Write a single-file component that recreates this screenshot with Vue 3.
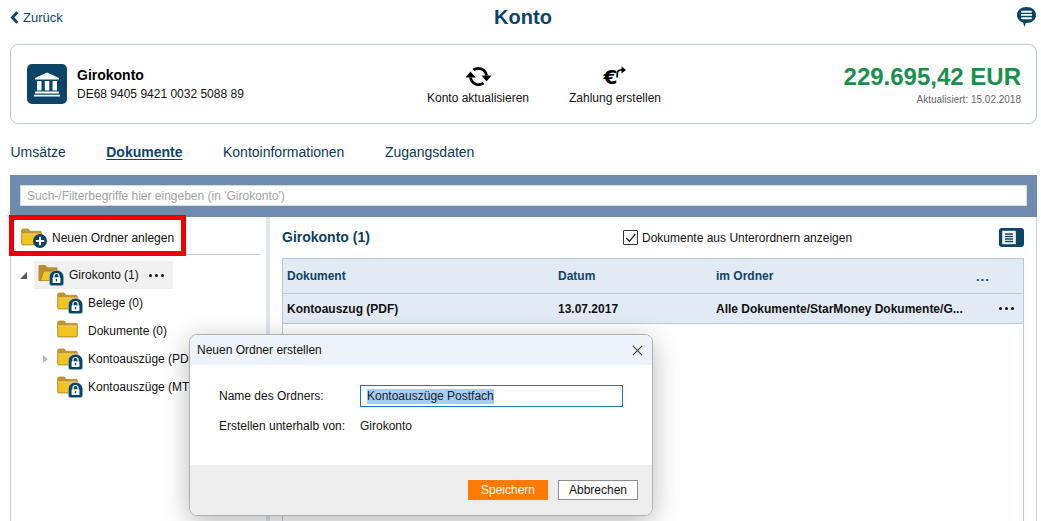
<script setup>
const tabs = [
  { label: 'Umsätze' },
  { label: 'Dokumente', active: true },
  { label: 'Kontoinformationen' },
  { label: 'Zugangsdaten' }
]
const children = [
  { name: 'Belege', count: '(0)', lock: true },
  { name: 'Dokumente', count: '(0)', lock: false },
  { name: 'Kontoauszüge (PDF)', count: '(1)', lock: true, expand: true },
  { name: 'Kontoauszüge (MT940)', count: '(0)', lock: true }
]
</script>

<template>
  <div class="page">
    <svg class="defs" width="0" height="0" aria-hidden="true">
      <defs>
        <symbol id="folder" viewBox="0 0 22 18">
          <path d="M.5 2C.5 1.200 1.200.5 2 .5h5.500L10 3h10c.8 0 1.500.7 1.500 1.500V16c0 .8-.7 1.500-1.500 1.500H2C1.200 17.500.5 16.800.5 16z" fill="#c4952a" stroke="#a98226" stroke-width=".6"/>
          <path d="M1.300 6.200h19.400V16c0 .4-.3.700-.7.700H2c-.4 0-.7-.3-.7-.7z" fill="#f1c51d"/>
          <path d="M1.300 5.400h19.400v.9H1.300z" fill="#fbe9a0"/>
        </symbol>
        <symbol id="folder-open" viewBox="0 0 22 18">
          <path d="M.5 2C.5 1.200 1.200.5 2 .5h5.500L10 3h9c.8 0 1.500.7 1.500 1.500V7H6L2.800 17.500H.5z" fill="#b88f2e"/>
          <path d="M5.700 6.500H22L19 17.500H1.500z" fill="#a98226"/>
          <path d="M6.300 7.400H20.700L18.300 16.600H3.200z" fill="#f0c62c"/>
        </symbol>
        <symbol id="lock" viewBox="0 0 16 17">
          <path d="M8 .3C12.500.3 15.700 3.500 15.700 7.500V14a2.700 2.700 0 0 1-2.700 2.700H3A2.700 2.700 0 0 1 .3 14V7.500C.3 3.500 3.500.3 8 .3z" fill="#0c4468" stroke="#fff" stroke-width=".5"/>
          <path d="M5.300 8V6.400a2.700 2.700 0 0 1 5.400 0V8" fill="none" stroke="#fff" stroke-width="1.300"/>
          <rect x="3.800" y="7.600" width="8.400" height="6.200" rx=".8" fill="#fff"/>
          <rect x="7.300" y="9.400" width="1.400" height="2.600" fill="#0c4468"/>
        </symbol>
      </defs>
    </svg>

    <header class="topbar">
      <a class="back">
        <svg class="chev" viewBox="0 0 9 13"><path d="M7.300 1.200 2.400 6.500l4.900 5.300" fill="none" stroke="#0c4468" stroke-width="2.800"/></svg>
        Zurück
      </a>
      <h1>Konto</h1>
      <svg class="chat" viewBox="0 0 19 20">
        <path d="M9.500 0C15 0 19 3.400 19 8s-4 8-9.500 8h-.7L7.500 20 6 15.500C2.500 14.500 0 11.600 0 8c0-4.600 4-8 9.500-8z" fill="#0c4468"/>
        <path d="M5 3.800h9a1 1 0 0 1 0 2H5a1 1 0 0 1 0-2zM4 7h11v1.800H4zM5 10.200h9a1 1 0 0 1 0 2H5a1 1 0 0 1 0-2z" fill="#fff"/>
      </svg>
    </header>

    <section class="card">
      <div class="account">
        <div class="bank">
          <svg viewBox="0 0 40 40">
            <path d="M20 8.500 8 14v1.500h24V14z" fill="#fff"/>
            <path d="M10 17h4.500v9.500H10zM17.800 17h4.500v9.500h-4.500zM25.500 17H30v9.500h-4.500z" fill="#fff"/>
            <path d="M8 27.500h24v2H8zM7 30.800h26v1.700H7z" fill="#fff"/>
          </svg>
        </div>
        <div class="acct-text">
          <strong>Girokonto</strong>
          <span>DE68 9405 9421 0032 5088 89</span>
        </div>
      </div>
      <div class="actions">
        <div class="action update">
          <svg viewBox="0 0 25 21">
            <path d="M7.500 3.800A8.400 8.400 0 0 1 20.500 9.500" fill="none" stroke="#000" stroke-width="2.700"/>
            <path d="M15.500 9.500h10L20.500 15.500z" fill="#000"/>
            <path d="M17.500 17.200A8.400 8.400 0 0 1 4.500 11.500" fill="none" stroke="#000" stroke-width="2.700"/>
            <path d="M-.5 11.500h10L4.500 5.500z" fill="#000"/>
          </svg>
          <span>Konto aktualisieren</span>
        </div>
        <div class="action pay">
          <div class="pay-icon">
            <b>€</b>
            <svg viewBox="0 0 10 12">
              <path d="M1.200 11.500V8C1.200 5.300 2.800 4 5 4h1.500" fill="none" stroke="#000" stroke-width="1.700"/>
              <path d="M5.500.5 10 4 5.500 7.500z" fill="#000"/>
            </svg>
          </div>
          <span>Zahlung erstellen</span>
        </div>
      </div>
      <div class="balance">
        <div class="amount">229.695,42 EUR</div>
        <div class="updated">Aktualisiert: 15.02.2018</div>
      </div>
    </section>

    <nav class="tabs">
      <a v-for="t in tabs" :key="t.label" :class="{ active: t.active }">{{ t.label }}</a>
    </nav>

    <div class="searchbar">
      <div class="search">Such-/Filterbegriffe hier eingeben (in 'Girokonto')</div>
    </div>

    <div class="panels">
      <aside class="left">
        <div class="new-folder">
          <div class="nf-icon">
            <svg class="nf-folder"><use href="#folder"/></svg>
            <svg class="nf-plus" viewBox="0 0 15 15">
              <circle cx="7.500" cy="7.500" r="7.500" fill="#0c4468"/>
              <path d="M7.500 3v9M3 7.500h9" stroke="#fff" stroke-width="2"/>
            </svg>
          </div>
          <span>Neuen Ordner anlegen</span>
        </div>
        <div class="rule"></div>
        <div class="tree">
          <div class="root-row">
            <span class="tri-open"></span>
            <div class="root-sel">
              <span class="ficon">
                <svg class="f"><use href="#folder-open"/></svg>
                <svg class="l"><use href="#lock"/></svg>
              </span>
              <span class="tname">Girokonto</span><span class="tcount">(1)</span>
              <span class="dots"><i></i><i></i><i></i></span>
            </div>
          </div>
          <div v-for="c in children" :key="c.name" class="child-row">
            <span class="tri-slot"><span v-if="c.expand" class="tri-closed"></span></span>
            <span class="ficon">
              <svg class="f"><use href="#folder"/></svg>
              <svg v-if="c.lock" class="l"><use href="#lock"/></svg>
            </span>
            <span class="tname">{{ c.name }}</span><span class="tcount">{{ c.count }}</span>
          </div>
        </div>
      </aside>

      <main class="right">
        <div class="right-head">
          <h2>Girokonto (1)</h2>
          <label class="check">
            <span class="box">
              <svg viewBox="0 0 12 12"><path d="M2 6.500 5 9.500 10.500 2.800" fill="none" stroke="#222" stroke-width="1.200"/></svg>
            </span>
            Dokumente aus Unterordnern anzeigen
          </label>
          <div class="view-btn">
            <svg viewBox="0 0 14 14">
              <rect x=".8" y=".8" width="12.400" height="12.400" fill="#fff" stroke="#fff"/>
              <path d="M3 3.500h8M3 6h8M3 8.500h8M3 11h8" stroke="#0c4468" stroke-width="1.400"/>
            </svg>
          </div>
        </div>
        <div class="table">
          <div class="thead">
            <span class="c1">Dokument</span>
            <span class="c2">Datum</span>
            <span class="c3">im Ordner</span>
            <span class="c4">...</span>
          </div>
          <div class="trow">
            <span class="c1">Kontoauszug (PDF)</span>
            <span class="c2">13.07.2017</span>
            <span class="c3">Alle Dokumente/StarMoney Dokumente/G...</span>
            <span class="c4 dots"><i></i><i></i><i></i></span>
          </div>
        </div>
      </main>
    </div>

    <div class="modal">
      <div class="m-head">
        <span>Neuen Ordner erstellen</span>
        <svg viewBox="0 0 12 12"><path d="M1 1l10 10M11 1 1 11" stroke="#333" stroke-width="1.100" fill="none"/></svg>
      </div>
      <div class="m-body">
        <div class="m-row">
          <label>Name des Ordners:</label>
          <div class="m-input"><span class="sel">Kontoauszüge Postfach</span></div>
        </div>
        <div class="m-row">
          <label>Erstellen unterhalb von:</label>
          <span>Girokonto</span>
        </div>
      </div>
      <div class="m-foot">
        <button class="save">Speichern</button>
        <button class="cancel">Abbrechen</button>
      </div>
    </div>
  </div>
</template>

<style scoped>
.page {
  position: relative;
  width: 1041px;
  height: 521px;
  overflow: hidden;
  background: #fff;
  font-family: "Liberation Sans", Arial, sans-serif;
  font-size: 12px;
  color: #111;
}
.defs { position: absolute; }
.topbar {
  height: 44px;
  position: relative;
  display: flex;
  align-items: center;
  justify-content: space-between;
  padding: 0 5px 9px 10px;
  box-sizing: border-box;
}
.back { display: flex; align-items: center; gap: 4px; color: #0c4468; font-size: 13px; }
.chev { width: 9px; height: 13px; }
h1 {
  position: absolute;
  left: 0;
  right: -5px;
  top: 5px;
  margin: 0;
  text-align: center;
  font-size: 20px;
  line-height: 24px;
  color: #0c4468;
}
.chat { width: 19px; height: 20px; margin-top: -1px; }
.card {
  margin: 0 4px 0 10px;
  height: 80px;
  box-sizing: border-box;
  border: 1px solid #b9c9da;
  border-radius: 8px;
  display: flex;
  align-items: center;
  padding: 0 15px 0 16px;
}
.account { display: flex; align-items: center; gap: 10px; width: 400px; flex: none; }
.bank {
  width: 40px;
  height: 40px;
  background: #0c4468;
  border-radius: 5px;
}
.bank svg { width: 40px; height: 40px; display: block; }
.acct-text { display: flex; flex-direction: column; gap: 4px; }
.acct-text strong { font-size: 14px; line-height: 16px; color: #000; }
.acct-text span { font-size: 12px; line-height: 14px; }
.actions { display: flex; padding-top: 3px; flex: none; }
.action { display: flex; flex-direction: column; align-items: center; gap: 3px; font-size: 12px; white-space: nowrap; }
.update { width: 102px; }
.update svg { width: 25px; height: 21px; margin-bottom: 1px; overflow: visible; }
.pay { width: 92px; margin-left: 40px; }
.pay-icon { display: flex; height: 22px; align-items: flex-start; }
.pay-icon b { font-family: "DejaVu Sans", sans-serif; font-size: 20px; line-height: 22px; color: #000; font-weight: 700; }
.pay-icon svg { width: 10px; height: 12px; margin: 0 0 0 -1px; }
.balance { margin-left: auto; text-align: right; }
.amount { font-size: 24px; line-height: 28px; font-weight: 700; color: #1b8f4c; }
.updated { font-size: 10px; line-height: 12px; margin-top: 3px; color: #666; }
.tabs {
  display: flex;
  gap: 40.500px;
  margin: 20px 0 0 10.500px;
  height: 31px;
  font-size: 14px;
  line-height: 17px;
  color: #0c3a58;
}
.tabs a.active { font-weight: 700; text-decoration: underline; text-underline-offset: 2px; color: #0c4468; }
.searchbar {
  margin: 0 4px 0 10px;
  height: 42px;
  box-sizing: border-box;
  background: #6f8cae;
  padding: 10px 10px 0 10px;
}
.search {
  height: 21px;
  box-sizing: border-box;
  background: #fff;
  border: 1px solid #d5dce4;
  padding-left: 6px;
  line-height: 20px;
  color: #a2a2a2;
  font-size: 12px;
}
.panels {
  display: flex;
  margin: 0 4px 0 10px;
  height: 304px;
  border-left: 1px solid #c1cfe0;
  border-right: 1px solid #c1cfe0;
}
.left { width: 255px; border-right: 4px solid #dde6f1; flex: none; }
.new-folder {
  margin: -2px 0 -2px -2px;
  width: 177px;
  height: 41px;
  box-sizing: border-box;
  border: 5px solid #f00000;
  display: flex;
  align-items: center;
  padding: 4px 0 0 7px;
  gap: 5px;
  position: relative;
  font-size: 12px;
  color: #111;
}
.nf-icon { position: relative; width: 26px; height: 20px; flex: none; }
.nf-folder { width: 21px; height: 18px; display: block; position: absolute; left: 0; top: 0; }
.nf-plus { position: absolute; right: 0; bottom: 0; width: 14px; height: 14px; }
.rule { height: 1px; background: #c1cfe0; margin: 0 6px 0 0; }
.tree { padding-top: 6px; }
.root-row, .child-row { display: flex; align-items: center; height: 28px; }
.root-row { padding-left: 9px; }
.tri-open {
  width: 0;
  height: 0;
  border-style: solid;
  border-width: 0 0 7px 7px;
  border-color: transparent transparent #555 transparent;
  margin-right: 7px;
}
.root-sel {
  width: 139px;
  height: 28px;
  background: #f0f0f0;
  display: flex;
  align-items: center;
  padding-left: 4px;
  box-sizing: border-box;
}
.ficon { position: relative; width: 24px; height: 20px; margin-right: 7px; flex: none; }
.ficon .f { width: 21px; height: 18px; position: absolute; left: 0; top: -1px; }
.ficon .l { width: 15px; height: 16px; position: absolute; right: -2px; bottom: -1px; }
.tname { white-space: nowrap; }
.tcount { margin-left: 3px; white-space: nowrap; }
.dots { display: inline-flex; gap: 3px; margin-left: 10px; }
.dots i { width: 3px; height: 3px; border-radius: 50%; background: #111; display: block; }
.child-row { padding-left: 29px; }
.tri-slot { width: 17px; flex: none; display: flex; align-items: center; }
.tri-closed {
  width: 0;
  height: 0;
  border-style: solid;
  border-width: 4px 0 4px 5px;
  border-color: transparent transparent transparent #bbb;
  margin-left: 3px;
}
.right { flex: 1; padding: 0 12px; min-width: 0; }
.right-head { height: 41px; display: flex; align-items: center; position: relative; }
h2 { margin: 0 0 2px; font-size: 14px; color: #0c3f60; width: 341px; font-weight: 700; flex: none; }
.check { display: flex; align-items: center; gap: 4px; font-size: 12px; }
.box {
  width: 13px;
  height: 13px;
  border: 1px solid #333;
  border-radius: 1px;
  display: block;
}
.box svg { width: 13px; height: 13px; display: block; }
.view-btn {
  margin-left: auto;
  width: 25px;
  height: 19px;
  background: #0c4468;
  border-radius: 3px;
  display: flex;
  align-items: center;
  padding-left: 3px;
  box-sizing: border-box;
}
.view-btn svg { width: 14px; height: 15px; }
.table {
  border: 1px solid #b9c9da;
  height: 300px;
  box-sizing: border-box;
}
.thead, .trow {
  display: flex;
  align-items: center;
  background: #e2eaf4;
  padding-left: 4px;
}
.thead { height: 34px; font-weight: 700; color: #0c4468; border-bottom: 1px solid #b9c9da; }
.trow { height: 30px; font-weight: 700; color: #111; border-bottom: 1px solid #b9c9da; box-sizing: border-box; }
.c1 { width: 271px; flex: none; }
.c2 { width: 158px; flex: none; }
.c3 { width: 260px; flex: none; white-space: nowrap; }
.thead .c4 { letter-spacing: 1px; font-size: 13px; }
.trow .c3 { width: 283px; }
.trow .c4 { margin-left: 0; }
.modal {
  position: absolute;
  left: 189px;
  top: 334px;
  width: 464px;
  height: 182px;
  background: #fff;
  border: 1px solid #b0b0b0;
  border-radius: 8px;
  box-sizing: border-box;
  box-shadow: 0 6px 26px rgba(0, 0, 0, 0.28);
  display: flex;
  flex-direction: column;
  overflow: hidden;
}
.m-head {
  height: 30px;
  flex: none;
  background: #eef2fa;
  display: flex;
  align-items: center;
  justify-content: space-between;
  padding: 0 9px 0 7px;
}
.m-head svg { width: 11px; height: 11px; }
.m-body { flex: 1; padding: 20px 0 0 29px; }
.m-row { display: flex; align-items: center; height: 22px; margin-bottom: 8px; }
.m-row label { width: 141px; flex: none; }
.m-input {
  width: 263px;
  height: 22px;
  box-sizing: border-box;
  border: 1px solid #1678c2;
  padding-left: 6px;
  line-height: 20px;
  font-size: 12px;
}
.sel { background: #a9cdee; color: #123; display: inline-block; line-height: 15px; }
.m-foot {
  height: 50px;
  flex: none;
  background: #eeeeee;
  display: flex;
  justify-content: flex-end;
  align-items: flex-start;
  gap: 10px;
  padding: 15px 14px 0 0;
  box-sizing: border-box;
}
.m-foot button { font-family: inherit; font-size: 12px; height: 20px; padding: 0; }
.save { width: 80px; background: #ff7a00; border: 0; color: #fff; }
.cancel { width: 80px; background: #fff; border: 1px solid #8c8c8c; color: #111; }
</style>
